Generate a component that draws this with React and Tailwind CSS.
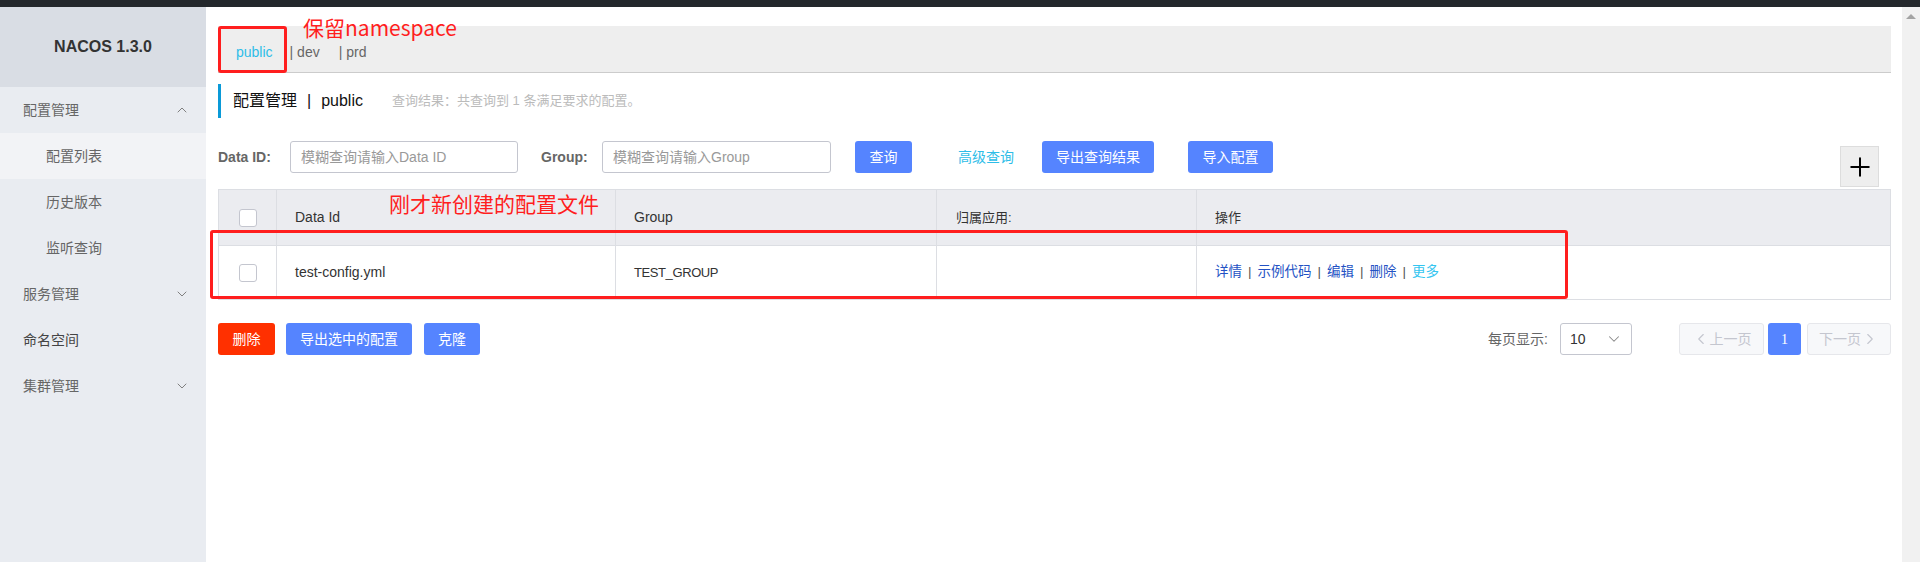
import { ChevronUp, ChevronDown, ChevronLeft, ChevronRight, Plus } from 'lucide-react';

const font = { fontFamily: '"Liberation Sans", "Noto Sans CJK SC", sans-serif' };

const menu = [
  { label: '配置管理', top: true, icon: 'up' },
  { label: '配置列表', active: true },
  { label: '历史版本' },
  { label: '监听查询' },
  { label: '服务管理', top: true, icon: 'down' },
  { label: '命名空间', top: true, dark: true },
  { label: '集群管理', top: true, icon: 'down' },
];

function Checkbox() {
  return <span className="block w-[18px] h-[18px] bg-white border border-[#c4c6cf] rounded-[3px]" />;
}

function Sidebar() {
  return (
    <aside className="w-[206px] shrink-0 flex flex-col bg-[#e9ecf1]">
      <div className="h-[80px] bg-[#d9dde4] flex items-center justify-center">
        <span className="text-[16px] font-bold text-[#333]">NACOS 1.3.0</span>
      </div>
      <ul>
        {menu.map((m) => (
          <li
            key={m.label}
            className={`h-[46px] flex items-center justify-between pr-[16px] text-[14px] ${
              m.top ? 'pl-[23px]' : 'pl-[46px]'
            } ${m.active ? 'bg-[#f2f3f6]' : ''} ${m.dark ? 'text-[#444]' : 'text-[#666]'}`}
          >
            <span>{m.label}</span>
            {m.icon === 'up' && <ChevronUp size={16} strokeWidth={1.4} className="text-[#777]" />}
            {m.icon === 'down' && <ChevronDown size={16} strokeWidth={1.4} className="text-[#777]" />}
          </li>
        ))}
      </ul>
    </aside>
  );
}

function Btn({ children, className = '' }) {
  return (
    <button className={`h-[32px] rounded-[3px] text-white text-[14px] ${className}`}>{children}</button>
  );
}

export default function App() {
  return (
    <div className="h-screen flex flex-col overflow-hidden bg-white" style={font}>
      <div className="h-[7px] shrink-0 bg-[#24282c]" />
      <div className="flex flex-1 min-h-0">
        <Sidebar />

        <main className="flex-1 min-w-0 pl-[12px] pr-[11px] pt-[19px]">
          {/* namespace tabs */}
          <div className="relative h-[47px] bg-[#eeeeee] border-b border-[#cccccc] flex items-center pl-[18px] pt-[6px] text-[14px]">
            <span className="text-[#2ebde8]">public</span>
            <span className="ml-[17px] text-[#666]">| dev</span>
            <span className="ml-[19px] text-[#666]">| prd</span>
            <div className="absolute left-0 top-0 w-[69px] h-[47px] border-[3px] border-[#ff1e1e] rounded-[3px]" />
            <span
              className="absolute left-[85px] top-[-9px] text-[21px] leading-none text-[#ff1e1e]"
              style={{ fontFamily: '"Noto Sans CJK SC", sans-serif' }}
            >
              保留namespace
            </span>
          </div>

          {/* title */}
          <div className="mt-[11px] h-[34px] border-l-[3px] border-[#0a9ad8] pl-[12px] flex items-center">
            <span className="text-[16px] text-[#111]">配置管理</span>
            <span className="text-[16px] text-[#111] mx-[10px]">|</span>
            <span className="text-[16px] text-[#111]">public</span>
            <span className="ml-[29px] text-[13px] text-[#bbbbbb]">查询结果：共查询到 1 条满足要求的配置。</span>
          </div>

          {/* search */}
          <div className="mt-[23px] flex items-start">
            <label className="h-[32px] w-[72px] flex items-center text-[14px] font-bold text-[#666]">Data ID:</label>
            <div className="h-[32px] w-[228px] border border-[#c4c6cf] rounded-[3px] flex items-center pl-[10px] text-[14px] text-[#999]">
              模糊查询请输入Data ID
            </div>
            <label className="ml-[23px] h-[32px] w-[61px] flex items-center text-[14px] font-bold text-[#666]">Group:</label>
            <div className="h-[32px] w-[229px] border border-[#c4c6cf] rounded-[3px] flex items-center pl-[10px] text-[14px] text-[#999]">
              模糊查询请输入Group
            </div>
            <Btn className="ml-[24px] w-[57px] bg-[#5584ff]">查询</Btn>
            <span className="ml-[46px] h-[32px] flex items-center text-[14px] text-[#2ebde8]">高级查询</span>
            <Btn className="ml-[28px] w-[112px] bg-[#5584ff]">导出查询结果</Btn>
            <Btn className="ml-[34px] w-[85px] bg-[#5584ff]">导入配置</Btn>
            <div className="ml-auto mr-[12px] mt-[5px] w-[39px] h-[41px] bg-[#eeeeee] border border-[#dddddd] flex items-center justify-center">
              <Plus size={30} strokeWidth={1.6} className="text-black" />
            </div>
          </div>

          {/* table */}
          <div className="relative mt-[2px] border border-[#dcdee3] text-[14px] text-[#333]">
            <div className="grid grid-cols-[58px_339px_321px_260px_1fr] h-[55px] bg-[#ebecf0]">
              <div className="flex items-center justify-center border-r border-[#dcdee3]"><Checkbox /></div>
              <div className="flex items-center pl-[18px] border-r border-[#dcdee3]">Data Id</div>
              <div className="flex items-center pl-[18px] border-r border-[#dcdee3]">Group</div>
              <div className="flex items-center pl-[19px] border-r border-[#dcdee3] text-[13px]">归属应用:</div>
              <div className="flex items-center pl-[18px] text-[13px]">操作</div>
            </div>
            <div className="grid grid-cols-[58px_339px_321px_260px_1fr] h-[54px] border-t border-[#dcdee3] bg-white">
              <div className="flex items-center justify-center border-r border-[#dcdee3]"><Checkbox /></div>
              <div className="flex items-center pl-[18px] border-r border-[#dcdee3]">test-config.yml</div>
              <div className="flex items-center pl-[18px] border-r border-[#dcdee3] text-[13px] tracking-[-0.4px]">TEST_GROUP</div>
              <div className="border-r border-[#dcdee3]" />
              <div className="flex items-center pl-[18px] text-[13.5px]">
                <span className="text-[#2352c4]">详情</span>
                <span className="mx-[6px] text-[#555]">|</span>
                <span className="text-[#2352c4]">示例代码</span>
                <span className="mx-[6px] text-[#555]">|</span>
                <span className="text-[#2352c4]">编辑</span>
                <span className="mx-[6px] text-[#555]">|</span>
                <span className="text-[#2352c4]">删除</span>
                <span className="mx-[6px] text-[#555]">|</span>
                <span className="text-[#34c5f0]">更多</span>
              </div>
            </div>
            <div className="absolute left-[-9px] top-[40px] w-[1358px] h-[69px] border-[3px] border-[#ff1e1e] rounded-[3px]" />
            <span
              className="absolute left-[170px] top-[3px] text-[21px] leading-none text-[#ff1e1e]"
              style={{ fontFamily: '"Noto Sans CJK SC", sans-serif' }}
            >
              刚才新创建的配置文件
            </span>
          </div>

          {/* footer */}
          <div className="mt-[23px] flex items-center">
            <Btn className="w-[57px] bg-[#ff3000]">删除</Btn>
            <Btn className="ml-[11px] w-[126px] bg-[#5584ff]">导出选中的配置</Btn>
            <Btn className="ml-[12px] w-[56px] bg-[#5584ff]">克隆</Btn>
            <span className="ml-auto text-[14px] text-[#666]">每页显示:</span>
            <div className="ml-[12px] h-[32px] w-[72px] border border-[#c4c6cf] rounded-[3px] flex items-center justify-between pl-[9px] pr-[8px] text-[14px] text-[#333]">
              <span>10</span>
              <ChevronDown size={18} strokeWidth={1.4} className="text-[#888]" />
            </div>
            <div className="ml-[47px] h-[32px] w-[85px] bg-[#f7f8fa] border border-[#e6e7eb] rounded-[3px] flex items-center justify-center text-[14px] text-[#c4c6cf]">
              <ChevronLeft size={18} strokeWidth={1.5} />
              <span>上一页</span>
            </div>
            <div className="ml-[4px] h-[32px] w-[33px] bg-[#5584ff] rounded-[3px] flex items-center justify-center text-[14px] text-white" style={{ fontFamily: '"Liberation Serif", serif' }}>
              1
            </div>
            <div className="ml-[6px] h-[32px] w-[84px] bg-[#f7f8fa] border border-[#e6e7eb] rounded-[3px] flex items-center justify-center text-[14px] text-[#c4c6cf]">
              <span>下一页</span>
              <ChevronRight size={18} strokeWidth={1.5} />
            </div>
          </div>
        </main>

        {/* scrollbar */}
        <div className="w-[18px] shrink-0 bg-[#f1f1f1] flex justify-center pt-[7px]">
          <span className="w-0 h-0 border-l-[5px] border-r-[5px] border-b-[5px] border-l-transparent border-r-transparent border-b-[#a3a3a3]" />
        </div>
      </div>
    </div>
  );
}
